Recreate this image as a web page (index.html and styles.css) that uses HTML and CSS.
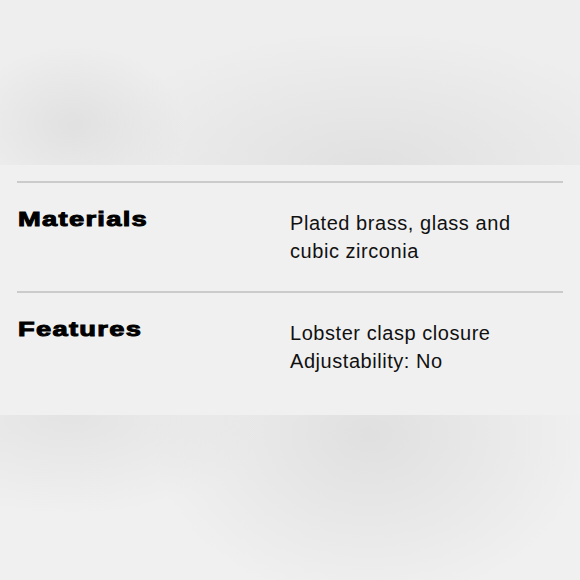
FILE: index.html
```html
<!DOCTYPE html>
<html>
<head>
<meta charset="utf-8">
<link rel="stylesheet" href="styles.css">
</head>
<body>
<div class="blur blur-top"></div>
<section class="specs">
  <div class="row">
    <div class="label"><span>Materials</span></div>
    <div class="value">Plated brass, glass and<br>cubic zirconia</div>
  </div>
  <div class="row">
    <div class="label"><span>Features</span></div>
    <div class="value">Lobster clasp closure<br>Adjustability: No</div>
  </div>
</section>
<div class="blur blur-bottom"></div>
</body>
</html>
```
FILE: styles.css
```css
html, body {
  margin: 0;
  padding: 0;
  background: #f0f0f0;
  width: 580px;
  height: 580px;
  overflow: hidden;
}
.blur {
  height: 165px;
}
.blur-top {
  background:
    radial-gradient(ellipse 110px 80px at 75px 125px, rgba(220,220,220,0.75), rgba(240,240,240,0) 100%),
    radial-gradient(ellipse 290px 140px at 370px 170px, rgba(222,222,222,0.85), rgba(240,240,240,0) 100%),
    #efeeee;
}
.blur-bottom {
  height: 165px;
  background:
    radial-gradient(ellipse 200px 100px at 70px 0px, rgba(224,224,224,0.8), rgba(240,240,240,0) 100%),
    radial-gradient(ellipse 220px 170px at 370px 20px, rgba(222,222,222,0.9), rgba(240,240,240,0) 100%),
    #f0f0f0;
}
.specs {
  background: #f0f0f0;
  padding: 16px 17px 14px 17px;
  height: 250px;
  box-sizing: border-box;
}
.row {
  display: grid;
  grid-template-columns: 273px 1fr;
  border-top: 2px solid #cbcbcb;
  height: 110px;
  box-sizing: border-box;
}
.label {
  padding-top: 22px;
  padding-left: 1px;
  font-family: "Liberation Sans", Arial, sans-serif;
  font-weight: bold;
  font-size: 21px;
  line-height: 28px;
  color: #000;
}
.label span {
  display: inline-block;
  letter-spacing: 1px;
  transform: scaleX(1.3);
  transform-origin: left center;
  -webkit-text-stroke: 1px #000;
}
.value {
  padding-top: 26px;
  font-family: "Liberation Sans", Arial, sans-serif;
  font-size: 20px;
  line-height: 28px;
  letter-spacing: 0.55px;
  color: #111;
}
```
